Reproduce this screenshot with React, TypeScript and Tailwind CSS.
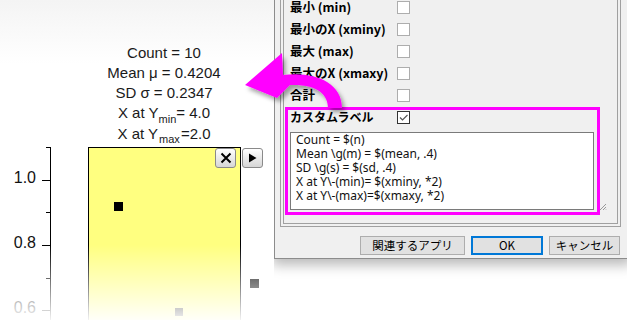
import React from "react";

const rows = [
  "最小 (min)",
  "最小のX (xminy)",
  "最大 (max)",
  "最大のX (xmaxy)",
  "合計",
];

const labelLines = [
  "Count = $(n)",
  "Mean \\g(m) = $(mean, .4)",
  "SD \\g(s) = $(sd, .4)",
  "X at Y\\-(min)= $(xminy, *2)",
  "X at Y\\-(max)=$(xmaxy, *2)",
];

const Checkbox = ({ checked = false }: { checked?: boolean }) => (
  <div
    className={`w-[13px] h-[13px] bg-white border flex items-center justify-center ${
      checked ? "border-[#333]" : "border-[#adadad]"
    }`}
  >
    {checked && (
      <svg width="11" height="11" viewBox="0 0 11 11">
        <path d="M2 5.5l2.5 2.5L9.5 3" fill="none" stroke="#555" strokeWidth="1.2" />
      </svg>
    )}
  </div>
);

const BoxButton = ({ children }: { children: React.ReactNode }) => (
  <div className="w-[21px] h-[20px] rounded-[3px] border border-[#8a8a8a] bg-linear-to-b from-white to-[#d6d6d6] flex items-center justify-center">
    {children}
  </div>
);

const Plot = () => (
  <div className="relative w-[274px] h-[320px] shrink-0 bg-linear-to-b from-[#f4f4f4] to-white to-20% font-['Liberation_Sans',Arial,sans-serif]">
    {/* stats label */}
    <div className="ml-[64px] w-[200px] pt-[43px] text-center text-[15px] leading-[20px] text-[#1a1a1a]">
      <div>Count = 10</div>
      <div>Mean μ = 0.4204</div>
      <div>SD σ = 0.2347</div>
      <div>
        X at Y
        <span className="relative top-[5px] text-[11px]">min</span>= 4.0
      </div>
      <div>
        X at Y
        <span className="relative z-10 top-[4px] text-[11px] bg-white px-[1px]">max</span>=2.0
      </div>
    </div>

    {/* chart */}
    <div className="relative mt-[2px] flex items-start">
      {/* y axis */}
      <div className="w-[36px] pt-[22px] flex flex-col gap-[47px] items-end text-[16px] leading-[18px] text-[#111]">
        <div>1.0</div>
        <div>0.8</div>
        <div>0.6</div>
      </div>
      <svg width="15" height="180" viewBox="0 0 15 180">
        <path
          d="M14.5 0V180M10 0.5H15M6 33.5H15M10 65.5H15M6 98.5H15M10 131.5H15M6 163.5H15"
          stroke="#000"
          strokeWidth="1"
        />
      </svg>

      {/* box */}
      <div className="relative ml-[37px] w-[153px] h-[190px] border border-black bg-[#ffff80]">
        <div className="absolute left-[25px] top-[54px] w-[9px] h-[9px] bg-black" />
        <div className="absolute left-[86px] top-[160px] w-[8px] h-[8px] bg-black" />
        <div className="absolute right-[4px] top-0">
          <BoxButton>
            <svg width="12" height="12" viewBox="0 0 12 12">
              <path d="M1.5 1.5l9 9M10.5 1.5l-9 9" stroke="#000" strokeWidth="2" />
            </svg>
          </BoxButton>
        </div>
      </div>

      <div className="ml-[1px] mt-[1px] flex flex-col gap-[111px]">
        <BoxButton>
          <svg width="9" height="10" viewBox="0 0 9 10">
            <path d="M1 0.5L8.5 5L1 9.5Z" fill="#000" />
          </svg>
        </BoxButton>
        <div className="ml-[8px] w-[9px] h-[9px] bg-black" />
      </div>
    </div>

    {/* fade */}
    <div className="absolute left-0 top-[245px] w-full h-[75px] bg-linear-to-b from-white/0 to-white/95" />
  </div>
);

const Dialog = () => (
  <div className="mt-[-20px] w-[360px] h-[279px] shrink-0 bg-[#f0f0f0] border border-[#8c8c8c] pl-[5px] pt-[5px] shadow-[-2px_6px_12px_rgba(0,0,0,0.28)] font-['Noto_Sans_CJK_JP',sans-serif] text-black">
    <div className="w-[341px] border border-[#a0a0a0] p-[2px]">
      <div className="border border-[#a0a0a0] pt-[6px] pb-[8px]">
        {rows.map((r) => (
          <div key={r} className="h-[22px] pl-[6px] flex items-center">
            <div className="w-[107px] text-[12.5px] font-bold leading-none">{r}</div>
            <Checkbox />
          </div>
        ))}
        <div className="relative ml-[1px] mt-[1px] w-[315px] border-[3px] border-[#ff00ff] pl-[2px] pb-[2px]">
          <div className="h-[14px] flex items-center">
            <div className="w-[107px] text-[12px] font-bold leading-none">カスタムラベル</div>
            <Checkbox checked />
          </div>
          <div className="mt-[8px] w-[304px] h-[78px] bg-white border border-[#7a7a7a] pl-[5px] font-['Noto_Sans',sans-serif] text-[12px] leading-[14px] text-[#111]">
            {labelLines.map((l) => (
              <div key={l} className="whitespace-pre">{l}</div>
            ))}
          </div>
          <svg className="absolute right-[-10px] bottom-[1px]" width="8" height="8" viewBox="0 0 8 8">
            <path d="M7 1L1 7M7 4L4 7M7 6.5L6.5 7" stroke="#999" strokeWidth="1" />
          </svg>
        </div>
      </div>
    </div>
    <div className="w-[341px] mt-[9px] pr-[1px] flex justify-end gap-[6px] text-[11.5px]">
      <button className="w-[105px] h-[19px] bg-[#e1e1e1] border border-[#adadad] leading-none">関連するアプリ</button>
      <button className="w-[72px] h-[19px] bg-[#e1e1e1] border-2 border-[#0078d7] leading-none">OK</button>
      <button className="w-[71px] h-[19px] bg-[#e1e1e1] border border-[#adadad] leading-none">キャンセル</button>
    </div>
  </div>
);

export default function App() {
  return (
    <div className="relative w-[627px] h-[320px] overflow-hidden bg-white flex items-start">
      <Plot />
      <Dialog />
      <svg className="absolute left-0 top-0 z-20 pointer-events-none" width="627" height="320" viewBox="0 0 627 320">
        <defs>
          <filter id="sh" x="-20%" y="-20%" width="150%" height="150%">
            <feDropShadow dx="3" dy="4" stdDeviation="2" floodColor="#000" floodOpacity="0.35" />
          </filter>
        </defs>
        <path
          d="M245 85L282 53L283 75C312 71 342 81 342 108L328 108C328 95 318 84 290 85L277 98Z"
          fill="#ff00ff"
          filter="url(#sh)"
        />
      </svg>
    </div>
  );
}
